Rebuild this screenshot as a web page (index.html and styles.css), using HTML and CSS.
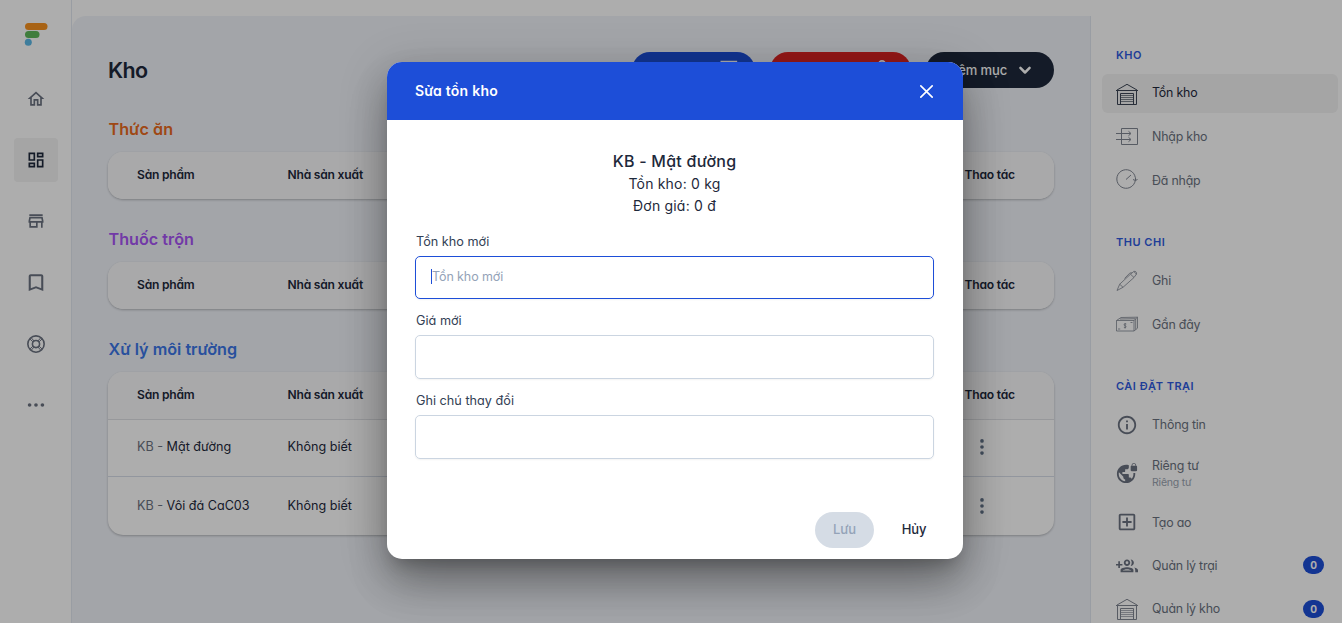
FILE: index.html
```html
<!DOCTYPE html>
<html lang="vi">
<head>
<meta charset="utf-8">
<title>Kho</title>
<link rel="stylesheet" href="styles.css">
</head>
<body>
<svg class="sprite" width="0" height="0">
  <symbol id="garage" viewBox="0 0 22 22"><path d="M1.500 8v13.500h19V8M0 7.500h22M1 7 11 1.300 21 7M4.500 21.500v-11h13v11"/><path d="M5 12.500h12M5 14.500h12M5 16.500h12M5 18.500h12" opacity=".65"/></symbol>
  <symbol id="dots" viewBox="0 0 24 24"><circle cx="12" cy="4.700" r="2.200"/><circle cx="12" cy="12" r="2.200"/><circle cx="12" cy="19.300" r="2.200"/></symbol>
</svg>
<div class="app">
  <nav class="rail">
    <svg class="logo" viewBox="0 0 24 24"><rect x="1" y="0" width="22.500" height="7" rx="3.500" fill="#f8931f"/><rect x="1" y="8" width="14.500" height="7" rx="3.500" fill="#5fb95a"/><circle cx="4.300" cy="19.200" r="3.500" fill="#5cb8e6"/></svg>
    <a class="rail-item"><svg viewBox="0 0 24 24"><path d="m12 5.690 5 4.500V18h-2v-6H9v6H7v-7.810zM12 3 2 12h3v8h6v-6h2v6h6v-8h3z"/></svg></a>
    <a class="rail-item on"><svg viewBox="0 0 24 24"><path d="M19 5v2h-4V5zM9 5v6H5V5zm10 8v6h-4v-6zM9 17v2H5v-2zM21 3h-8v6h8zM11 3H3v10h8zm10 8h-8v10h8zm-10 4H3v6h8z"/></svg></a>
    <a class="rail-item"><svg viewBox="0 0 24 24"><path d="M18.360 9l.6 3H5.040l.6-3zM20 4H4v2h16zm0 3H4l-1 5v2h1v6h10v-6h4v6h2v-6h1v-2zM6 18v-4h6v4z"/></svg></a>
    <a class="rail-item"><svg viewBox="0 0 24 24"><path d="M17 3H7c-1.100 0-2 .9-2 2v16l7-3 7 3V5c0-1.100-.9-2-2-2m0 15-5-2.180L7 18V5h10z" transform="translate(-3 -1.800) scale(1.250 1.120)"/></svg></a>
    <a class="rail-item"><svg viewBox="0 0 24 24" class="line"><circle cx="12" cy="12" r="9.800"/><circle cx="12" cy="12" r="4.300"/><path d="M5 6.300 8.300 9.300M6.500 4.800l3 3.400M19 6.300l-3.300 3M17.500 4.800l-3 3.400M5 17.700l3.300-3M6.500 19.200l3-3.400M19 17.700l-3.300-3M17.500 19.200l-3-3.400" stroke-width="1.200"/></svg></a>
    <a class="rail-item"><svg viewBox="0 0 24 24"><circle cx="4.300" cy="12" r="2.200"/><circle cx="12" cy="12" r="2.200"/><circle cx="19.700" cy="12" r="2.200"/></svg></a>
  </nav>

  <main class="page">
    <header class="page-head">
      <h1>Kho</h1>
      <div class="actions">
        <button class="pill blue">Nhập kho <svg viewBox="0 0 24 24"><path d="M3 .8h20v2.400H3zM3 9h20v2H3z"/></svg></button>
        <button class="pill red">Xuất kho <svg viewBox="0 0 24 24" class="line"><circle cx="12" cy="5" r="4"/></svg></button>
        <button class="pill dark">Thêm mục <svg viewBox="0 0 24 24" class="line thick"><path d="m6.500 9.500 5.500 5.500 5.500-5.500"/></svg></button>
      </div>
    </header>

    <h2 class="orange">Thức ăn</h2>
    <section class="card"><div class="row head"><span>Sản phẩm</span><span>Nhà sản xuất</span><span>Thao tác</span></div></section>

    <h2 class="purple">Thuốc trộn</h2>
    <section class="card"><div class="row head"><span>Sản phẩm</span><span>Nhà sản xuất</span><span>Thao tác</span></div></section>

    <h2 class="azure">Xử lý môi trường</h2>
    <section class="card">
      <div class="row head"><span>Sản phẩm</span><span>Nhà sản xuất</span><span>Thao tác</span></div>
      <div class="row item first"><span><i>KB -</i> Mật đường</span><span>Không biết</span><svg><use href="#dots"/></svg></div>
      <div class="row item"><span><i>KB -</i> Vôi đá CaC03</span><span>Không biết</span><svg><use href="#dots"/></svg></div>
    </section>
  </main>

  <aside class="side">
    <h3>KHO</h3>
    <a class="link on"><svg class="thin"><use href="#garage"/></svg><span>Tồn kho</span></a>
    <a class="link"><svg class="thin" viewBox="0 0 22 22"><path d="M5.500 2.500h16v16h-16zM0 7.500h14.500M0 13.500h14.500M12.500 5.300l2.500 2.200-2.500 2.200M12.500 11.300l2.500 2.200-2.500 2.200"/></svg><span>Nhập kho</span></a>
    <a class="link"><svg class="thin" viewBox="0 0 22 22"><path d="M19.300 11.500a9.300 9.300 0 1 1 0-3M10 10.500l5-4.500M17 10.500l2.300 1 2.200-1M19.500 8.500v3"/></svg><span>Đã nhập</span></a>
    <h3>THU CHI</h3>
    <a class="link"><svg class="thin pen" viewBox="0 0 22 22"><path d="M1 20.500 3.700 14.200 14.500 4.200l3.300-2.700c1.500-.8 3.300.9 2.700 2.500L18 7.500 7 17.300zM3.700 14.200 7 17.300M14.500 4.200 18 7.500M17.800 1.500l2.700 2.700M8.500 8.500l5.200-5.300 2-.6"/></svg><span>Ghi</span></a>
    <a class="link"><svg class="thin pen" viewBox="0 0 22 22"><path d="M.5 7.500h17.500V18H.5zM.5 7.500 5 4.500l16.500-.3v11L18 18M18 7.500l3.500-3.300M19.700 6v10.500M4 6l15.500-.3M2 16h2.200M14.500 9.500h2M10.300 11c-2.400-1-2.900 1.400-1.200 1.700 1.700.4 1.200 2.600-1.200 1.700M9.100 10v5.500"/></svg><span>Gần đây</span></a>
    <h3>CÀI ĐẶT TRẠI</h3>
    <a class="link"><svg viewBox="0 0 24 24"><path d="M11 7h2v2h-2zm0 4h2v6h-2zm1-9C6.480 2 2 6.480 2 12s4.480 10 10 10 10-4.480 10-10S17.520 2 12 2m0 18c-4.410 0-8-3.590-8-8s3.590-8 8-8 8 3.590 8 8-3.590 8-8 8"/></svg><span>Thông tin</span></a>
    <a class="link tall"><svg viewBox="0 0 24 24"><path d="M22 4v-.5C22 2.120 20.880 1 19.500 1S17 2.120 17 3.500V4c-.55 0-1 .45-1 1v4c0 .55.450 1 1 1h5c.55 0 1-.45 1-1V5c0-.55-.45-1-1-1m-.8 0h-3.400v-.5c0-.94.760-1.700 1.700-1.700s1.700.76 1.700 1.700zm-2.280 8c.040.330.080.660.080 1 0 2.080-.8 3.970-2.100 5.390-.26-.81-1-1.390-1.900-1.390h-1v-3c0-.55-.45-1-1-1H7v-2h2c.55 0 1-.45 1-1V8h2c1.100 0 2-.9 2-2V3.460c-.95-.3-1.950-.46-3-.46C5.480 3 1 7.480 1 13s4.480 10 10 10 10-4.480 10-10c0-.34-.02-.67-.05-1zM10 20.930c-3.950-.49-7-3.850-7-7.930 0-.62.080-1.210.210-1.790L8 16v1c0 1.100.9 2 2 2z"/></svg><span>Riêng tư<small>Riêng tư</small></span></a>
    <a class="link"><svg viewBox="0 0 24 24"><path d="M19 3H5c-1.110 0-2 .9-2 2v14c0 1.100.890 2 2 2h14c1.100 0 2-.9 2-2V5c0-1.100-.9-2-2-2m0 16H5V5h14zm-8-2h2v-4h4v-2h-4V7h-2v4H7v2h4z"/></svg><span>Tạo ao</span></a>
    <a class="link"><svg viewBox="0 0 24 24"><path d="M4 8H2.500v2.800H0v1.800h2.500v2.800h1.800v-2.800H7v-1.800H4.300V8z"/><path d="M12 13c1.930 0 3.500-1.570 3.500-3.500S13.930 6 12 6 8.500 7.570 8.500 9.500 10.070 13 12 13m0-5a1.500 1.500 0 1 1 0 3 1.500 1.500 0 0 1 0-3M5 17.500V20h14v-2.500c0-2-4.300-3-7-3s-7 1-7 3m2.300.5c.7-.9 2.900-1.500 4.700-1.500s4 .6 4.700 1.500zM16 6c1.930 0 3.500 1.570 3.500 3.500S17.930 13 16 13c1.600-2.100 1.600-4.900 0-7M20 14.800c2 .5 4 1.400 4 2.900V20h-3v-2.300c0-1.200-.4-2.100-1-2.900"/></svg><span>Quản lý trại</span><b>0</b></a>
    <a class="link"><svg class="thin"><use href="#garage"/></svg><span>Quản lý kho</span><b>0</b></a>
  </aside>
</div>

<div class="backdrop">
  <form class="dialog">
    <header><strong>Sửa tồn kho</strong><svg viewBox="0 0 24 24" class="line"><path d="m5.500 5.500 13 13M18.500 5.500l-13 13"/></svg></header>
    <div class="body">
      <div class="summary"><h4>KB - Mật đường</h4><p>Tồn kho: 0 kg</p><p>Đơn giá: 0 đ</p></div>
      <label>Tồn kho mới</label>
      <div class="field focus"><span>Tồn kho mới</span></div>
      <label>Giá mới</label>
      <div class="field"></div>
      <label>Ghi chú thay đổi</label>
      <div class="field"></div>
    </div>
    <footer><button type="button" class="save">Lưu</button><button type="button" class="cancel">Hủy</button></footer>
  </form>
</div>
</body>
</html>
```
FILE: styles.css
```css
* { box-sizing: border-box; margin: 0; }
body {
  font: 400 13px/20px Inter, "Noto Sans", sans-serif;
  font-feature-settings: "cv11";
  color: #1e293b;
  height: 623px;
  overflow: hidden;
}
button { font: inherit; font-feature-settings: inherit; border: 0; }
.sprite { display: block; height: 0; }
svg { fill: currentColor; flex: none; }
.line { fill: none; stroke: currentColor; stroke-width: 1.900; stroke-linecap: round; stroke-linejoin: round; }
.thick { stroke-width: 3; }
.thin { fill: none; stroke: currentColor; stroke-width: 1; opacity: .85; }

.app { display: flex; height: 623px; background: #fff; }
.rail { width: 72px; border-right: 1px solid #e2e8f0; display: flex; flex-direction: column; align-items: center; color: #64748b; }
.logo { width: 24px; height: 24px; margin: 23px 0 30px; }
.rail-item { width: 44px; height: 44px; margin-bottom: 17.200px; border-radius: 4px; display: grid; place-items: center; color: #6b7280; }
.rail-item svg { width: 20px; height: 20px; }
.rail-item.on { background: #f3f3f3; color: #1e293b; }

.page { width: 1019px; margin-top: 16px; padding: 36px 36px 0 36px; background: #f1f4fa; border-radius: 14px 0 0 0; border-right: 1px solid #e2e8f0; }
.page-head { display: flex; justify-content: space-between; height: 66px; }
h1 { font-size: 21.500px; font-weight: 600; line-height: 36px; letter-spacing: -.6px; color: #1e293b; }
.actions { display: flex; gap: 15px; }
.pill { height: 36px; border-radius: 18px; color: #fff; font-weight: 500; letter-spacing: -.15px; display: flex; align-items: center; justify-content: flex-end; gap: 8px; padding: 0 19px 0 18px; white-space: nowrap; }
.pill svg { width: 20px; height: 20px; }
.blue { background: #1d4ed8; width: 123px; padding-right: 17px; }
.red { background: #dc2626; width: 141px; }
.dark { background: #1e293b; width: 128px; }

h2 { font-size: 16.200px; font-weight: 600; line-height: 22px; margin-bottom: 12px; padding-left: .5px; }
.orange { color: #ea6a20; }
.purple { color: #a855f7; }
.azure { color: #3b76e8; }
.card { background: #fff; border-radius: 15px; overflow: hidden; box-shadow: 0 1px 3px rgba(0,0,0,.16), 0 1px 2px rgba(0,0,0,.1); margin-bottom: 29px; }
.row { display: grid; grid-template-columns: 150.500px 677px 1fr; padding-left: 29px; align-items: center; font-size: 12.600px; }
.head { height: 47px; font-weight: 600; font-size: 12.100px; letter-spacing: -.22px; background: #f9fafb; padding-bottom: 2px; }
.item { height: 59px; border-top: 1px solid #d8dee9; }
.item.first { height: 57px; border-top-color: #dfe1e5; padding-bottom: 3px; }
.item i { font-style: normal; color: #6b7280; }
.item svg { width: 20px; height: 20px; margin-left: 7px; color: #64748b; }

.side { width: 251px; padding: 45px 4px 0 11px; overflow: hidden; color: #64748b; }
.side h3 { font-size: 11px; font-weight: 600; letter-spacing: .5px; line-height: 20px; padding-left: 14px; margin: 0 0 9px; color: #2f5be0; }
.link { display: flex; align-items: center; height: 39px; padding: 0 14px; margin-bottom: 4.400px; border-radius: 6px; color: #6b7280; font-size: 12.400px; letter-spacing: -.2px; }
.link > svg { width: 22px; height: 22px; margin-right: 14px; }
.link > span { padding-top: 1px; }
.link.on > span, .link.tall > span { padding: 0 0 1px; }
.link.on { background: #f3f3f3; color: #1e293b; }
.link + h3 { margin-top: 32px; margin-bottom: 9.500px; }
.link.tall { height: 49px; margin-bottom: 5px; }
.pen { stroke-width: .8; }
.link small { display: block; font-size: 10.500px; line-height: 13px; color: #9aa3b0; }
.link b { margin-left: auto; width: 21px; height: 18px; border-radius: 9px; background: #1d4ed8; color: #fff; font-size: 10px; line-height: 18px; text-align: center; }

.backdrop { position: absolute; inset: 0; background: rgba(0,0,0,.32); display: flex; justify-content: center; align-items: flex-start; padding: 62px 0 0 8px; }
.dialog { width: 576px; height: 497px; background: #fff; border-radius: 15px; overflow: hidden; display: flex; flex-direction: column; box-shadow: 0 11px 15px -7px rgba(0,0,0,.2), 0 24px 38px 3px rgba(0,0,0,.14), 0 9px 46px 8px rgba(0,0,0,.12), 0 25px 50px -12px rgba(0,0,0,.25); }
.dialog header { height: 58px; background: #1d4ed8; color: #fff; display: flex; justify-content: space-between; align-items: center; padding: 0 26px 0 28px; }
.dialog header strong { font-size: 14px; font-weight: 600; letter-spacing: .25px; }
.dialog header svg { width: 21px; height: 21px; }
.body { flex: 1; padding: 30px 29px 0 28px; }
.summary { text-align: center; font-size: 14px; line-height: 22px; letter-spacing: .2px; height: 81px; }
h4 { font-size: 16px; font-weight: 550; line-height: 23px; letter-spacing: .25px; }
.body label { display: block; line-height: 22px; padding-left: 1px; height: 25px; color: #334155; font-size: 12.700px; }
.field { height: 44px; border: 1px solid #cbd5e1; border-radius: 5px; margin-bottom: 11px; box-shadow: 0 1px 2px rgba(0,0,0,.05); display: flex; align-items: center; padding: 0 15px 3px; }
.focus { border-color: #1d4ed8; height: 43px; }
.focus span { border-left: 1px solid #1d4ed8; line-height: 15px; color: #94a3b8; font-size: 12.500px; letter-spacing: -.1px; }
.dialog footer { display: flex; height: 47px; padding-right: 18px; justify-content: flex-end; gap: 11px; }
.dialog footer button { height: 36px; border-radius: 18px; font-weight: 500; padding-bottom: 3px; letter-spacing: -.15px; }
.save { width: 59px; background: #d5dce5; color: #94a3b8; }
.dialog footer .save { margin-right: -1px; }
.cancel { width: 60px; background: none; color: #1e293b; }
.dialog footer { padding-right: 19px; }
```
